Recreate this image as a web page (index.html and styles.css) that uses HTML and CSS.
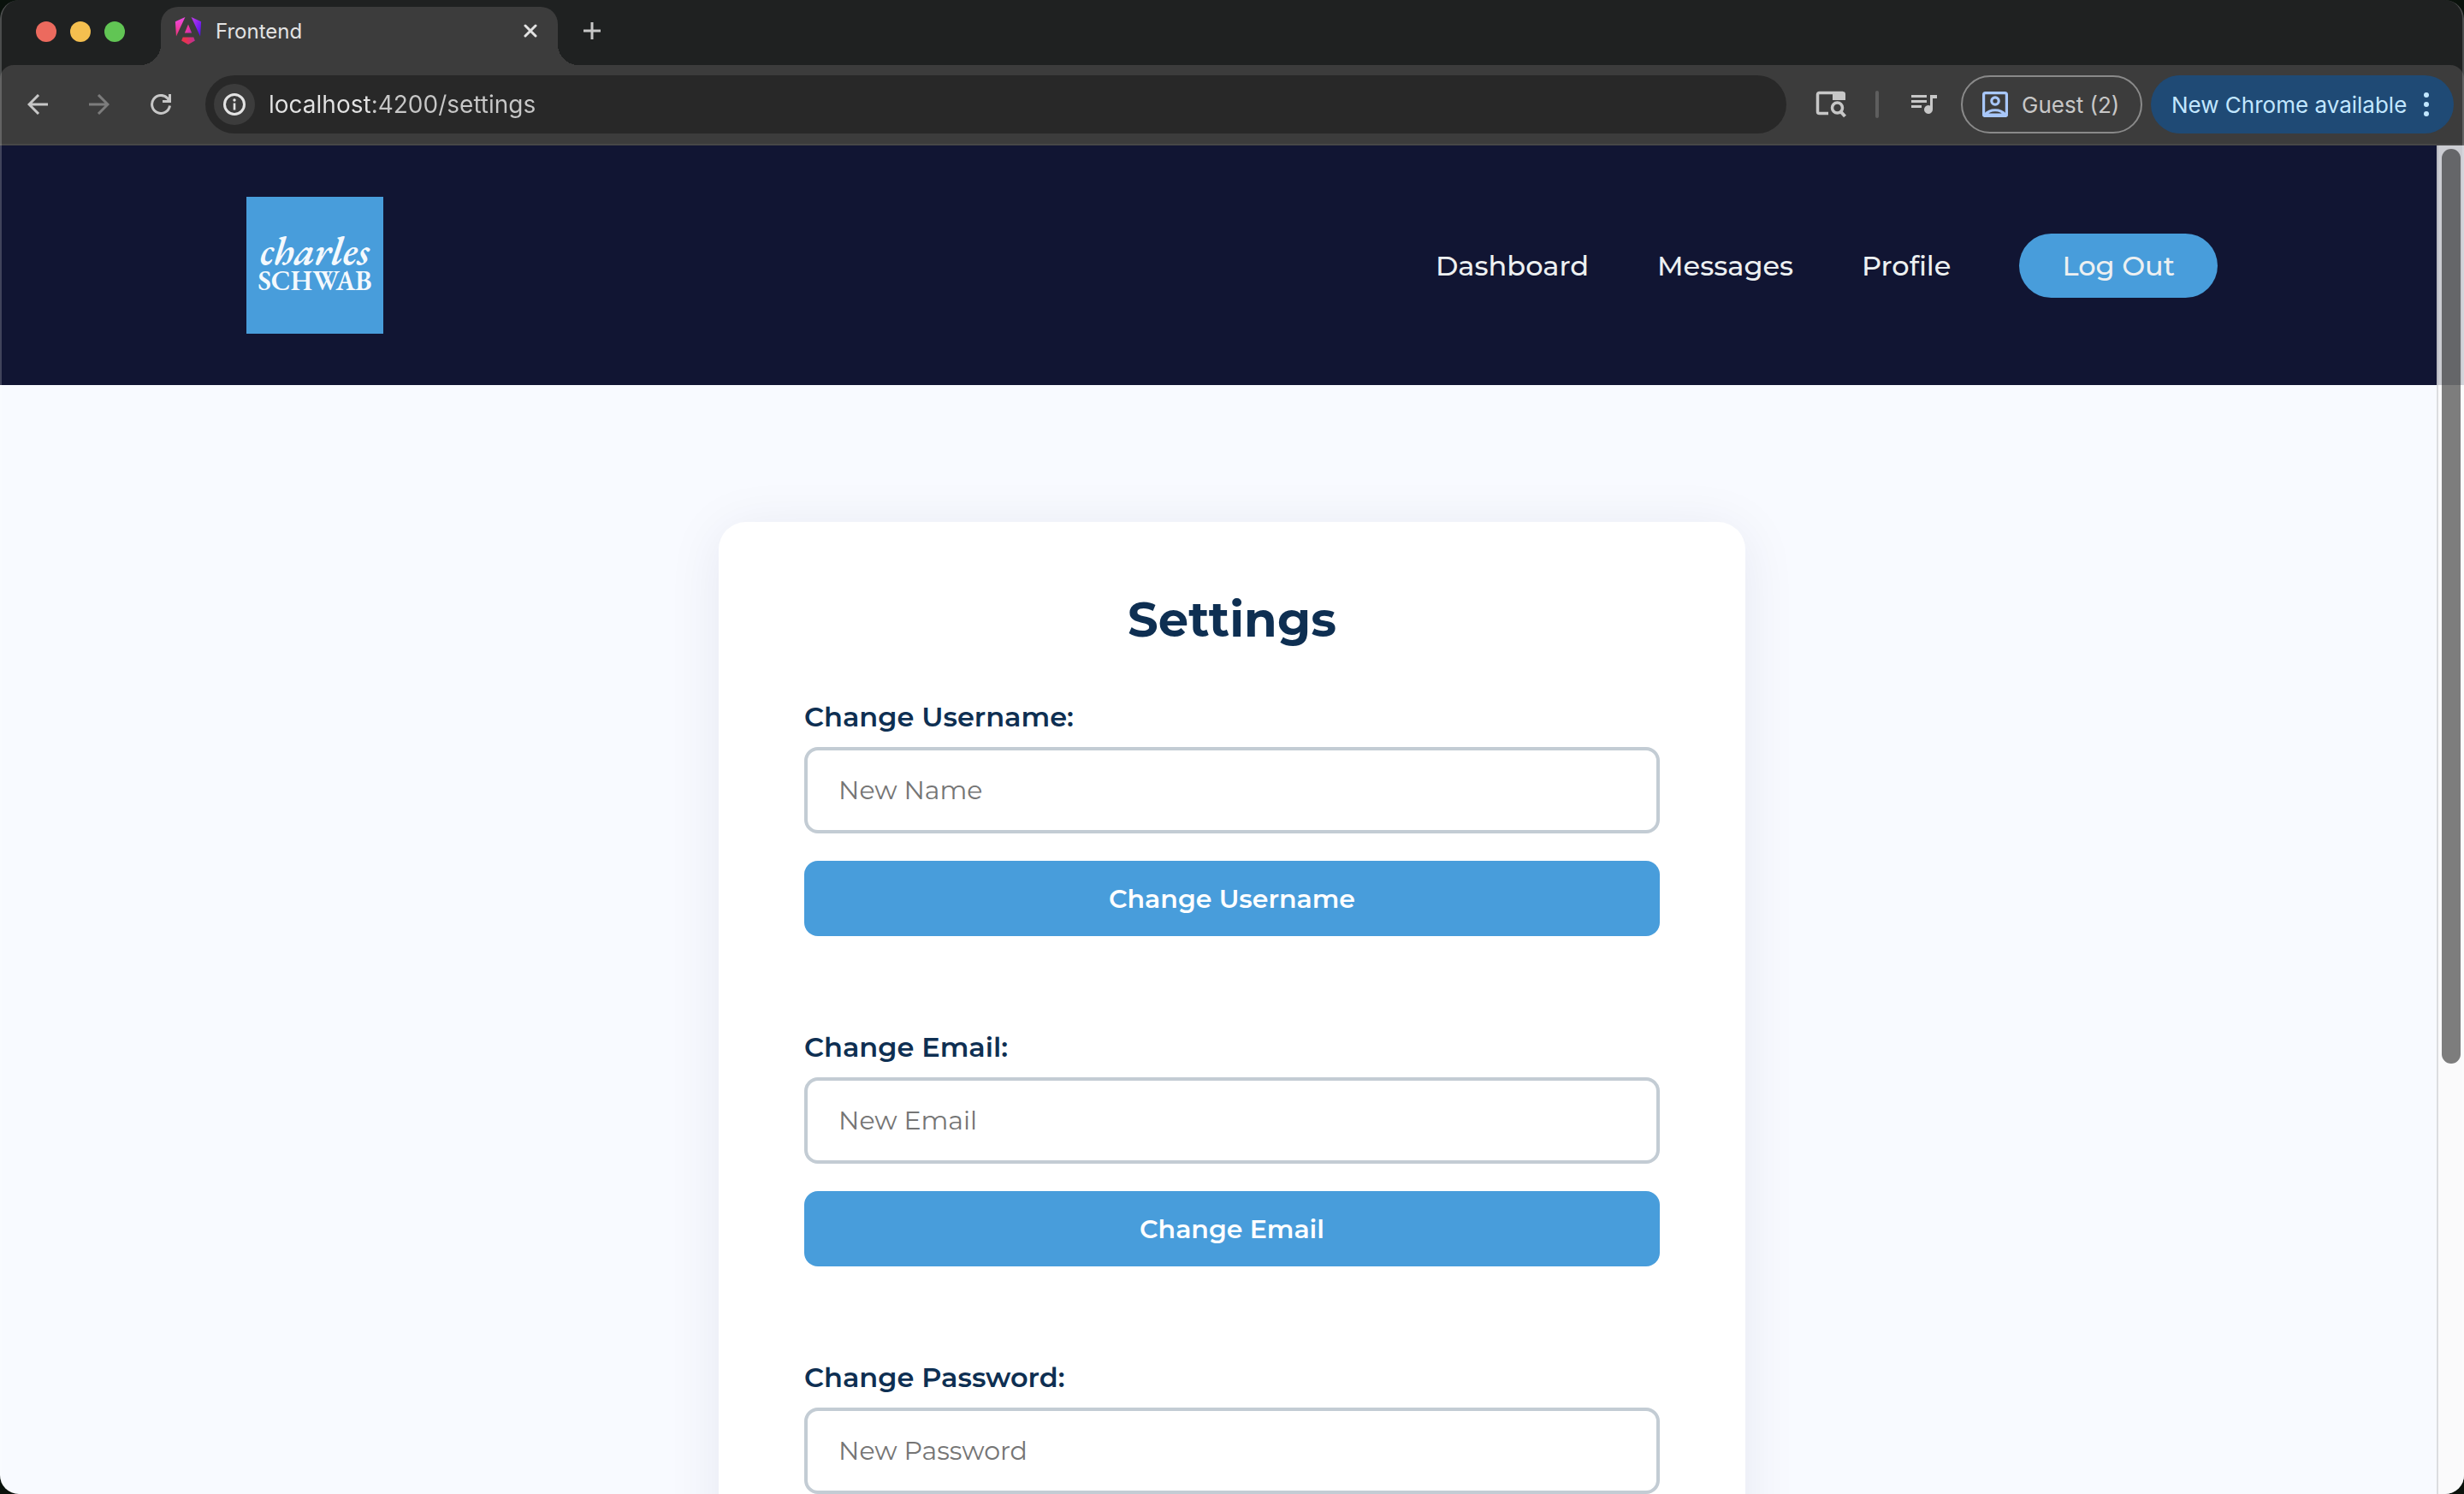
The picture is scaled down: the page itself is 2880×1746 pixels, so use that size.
FILE: index.html
```
<!DOCTYPE html>
<html lang="en">
<head>
<meta charset="utf-8">
<meta name="viewport" content="width=device-width, initial-scale=1">
<title>Frontend</title>
<link rel="stylesheet" href="styles.css">
</head>
<body>
<div class="window">
  <div class="tab-strip">
    <div class="lights">
      <span class="light light-close"></span>
      <span class="light light-min"></span>
      <span class="light light-max"></span>
    </div>
    <div class="tab">
      <svg class="favicon" viewBox="0 0 24 24" aria-hidden="true">
        <defs>
          <linearGradient id="ng-a" x1="0" y1="0.2" x2="1" y2="0.8">
            <stop offset="0" stop-color="#f74ad8"/>
            <stop offset="0.35" stop-color="#f0389c"/>
            <stop offset="1" stop-color="#c22cc0"/>
          </linearGradient>
          <linearGradient id="ng-l" x1="0" y1="0" x2="0" y2="1">
            <stop offset="0" stop-color="#ee4ae8"/>
            <stop offset="1" stop-color="#ee3373"/>
          </linearGradient>
          <linearGradient id="ng-r" x1="0" y1="0" x2="1" y2="1">
            <stop offset="0" stop-color="#c43ce8"/>
            <stop offset="1" stop-color="#4a0cf5"/>
          </linearGradient>
          <linearGradient id="ng-b" x1="0" y1="0" x2="1" y2="0">
            <stop offset="0.3" stop-color="#e8334f"/>
            <stop offset="1" stop-color="#bb2f9a"/>
          </linearGradient>
        </defs>
        <path fill="url(#ng-b)" d="M16.712 17.711H7.288l-1.204 2.916L12 24l5.916-3.373z"/>
        <path fill="url(#ng-r)" d="M14.692 0l7.832 16.855.814-12.856z"/>
        <path fill="url(#ng-l)" d="M9.308 0 .662 3.999l.814 12.856z"/>
        <path fill="url(#ng-a)" d="M8.903 13.93h6.198L12 6.396z"/>
      </svg>
      <span class="tab-title">Frontend</span>
      <button class="icon-button" type="button" aria-label="Close tab">
        <svg width="16" height="16" viewBox="0 0 16 16" fill="none" stroke="#e3e3e3" stroke-width="3" stroke-linecap="round"><path d="M2 2l12 12M14 2L2 14"/></svg>
      </button>
    </div>
    <button class="icon-button new-tab" type="button" aria-label="New tab">
      <svg width="20" height="20" viewBox="0 0 20 20" fill="none" stroke="#c7c7c7" stroke-width="3"><path d="M10 0v20M0 10h20"/></svg>
    </button>
  </div>

  <div class="toolbar">
    <div class="nav-buttons">
      <button class="icon-button nav-button" type="button" aria-label="Back">
        <svg width="24" height="24" viewBox="0 0 24 24" fill="none" stroke="#c7c7c7" stroke-width="3"><path d="M24 12H2.500M13 1L2 12l11 11"/></svg>
      </button>
      <button class="icon-button nav-button" type="button" aria-label="Forward">
        <svg width="24" height="24" viewBox="0 0 24 24" fill="none" stroke="#7c7c7c" stroke-width="3"><path d="M0 12h21.500M11 1l11 11-11 11"/></svg>
      </button>
      <button class="icon-button nav-button" type="button" aria-label="Reload">
        <svg width="24" height="24" viewBox="0 0 24 24" fill="none" stroke="#c7c7c7" stroke-width="3"><path d="M22.500 13.500A10.500 10.500 0 1 1 20 5l1.500 2.500M22.500 0v8.500H14"/></svg>
      </button>
    </div>
    <div class="omnibox">
      <button class="icon-button site-info" type="button" aria-label="View site information">
        <svg width="26" height="26" viewBox="0 0 26 26"><circle cx="13" cy="13" r="11.500" fill="none" stroke="#e3e3e3" stroke-width="3"/><circle cx="13" cy="8" r="1.700" fill="#e3e3e3"/><path d="M13 11.500v8" stroke="#e3e3e3" stroke-width="2.600"/></svg>
      </button>
      <input class="url" type="text" aria-label="Address" value="localhost:4200/settings">
    </div>
    <div class="toolbar-actions">
      <button class="icon-button" type="button" aria-label="Side panel search">
        <svg width="36" height="32" viewBox="0 0 36 32" fill="none" stroke="#c7c7c7"><path d="M15 26.500H4.500a2 2 0 0 1-2-2v-20a2 2 0 0 1 2-2H32" stroke-width="3.500"/><path d="M20 1h12a3 3 0 0 1 3 3v7H20z" fill="#c7c7c7" stroke="none"/><circle cx="25.500" cy="20" r="6" stroke-width="3.500"/><path d="M29.500 24.500l5 5.500" stroke-width="4"/></svg>
      </button>
      <span class="divider"></span>
      <button class="icon-button media" type="button" aria-label="Media controls">
        <svg width="30" height="24" viewBox="0 0 30 24" fill="#c7c7c7"><path d="M0 1h18v3H0zM0 7h18v3H0zM0 13h12v3H0z"/><path d="M22 1h8v4h-5v13a5 5 0 1 1-3-4.600z"/></svg>
      </button>
      <button class="guest" type="button">
        <svg width="30" height="30" viewBox="0 0 30 30" fill="none" stroke="#a8c7fa" stroke-width="3.200"><rect x="1.600" y="1.600" width="26.800" height="26.800" rx="2"/><circle cx="15" cy="11" r="4.200"/><path d="M3 27c6-7 18-7 24 0z"/></svg>
        Guest (2)
      </button>
      <button class="update" type="button">
        New Chrome available
        <svg width="6" height="28" viewBox="0 0 6 28" fill="#c2e7ff"><circle cx="3" cy="3" r="3"/><circle cx="3" cy="14" r="3"/><circle cx="3" cy="25" r="3"/></svg>
      </button>
    </div>
  </div>

  <div class="viewport">
    <header class="site-header">
      <a class="logo" href="#" aria-label="Charles Schwab">
        <span class="logo-first">charles</span>
        <span class="logo-last">SCHWAB</span>
      </a>
      <nav class="site-nav">
        <a href="#">Dashboard</a>
        <a href="#">Messages</a>
        <a href="#">Profile</a>
        <button class="logout" type="button">Log Out</button>
      </nav>
    </header>

    <main class="page">
      <section class="card">
        <h1>Settings</h1>
        <form class="group">
          <label for="username">Change Username:</label>
          <input id="username" type="text" placeholder="New Name">
          <button type="submit">Change Username</button>
        </form>
        <form class="group">
          <label for="email">Change Email:</label>
          <input id="email" type="email" placeholder="New Email">
          <button type="submit">Change Email</button>
        </form>
        <form class="group">
          <label for="password">Change Password:</label>
          <input id="password" type="password" placeholder="New Password">
        </form>
      </section>
    </main>

    <div class="scrollbar"><div class="thumb"></div></div>
  </div>
</div>
</body>
</html>
```
FILE: styles.css
```
* {
  box-sizing: border-box;
}

body {
  margin: 0;
  background: #0a120c;
  font-family: Montserrat, Inter, sans-serif;
}

button,
input {
  font-family: inherit;
}

button {
  border: 0;
  cursor: pointer;
}

svg {
  display: block;
  flex: none;
}

/* Browser window */

.window {
  position: relative;
  display: flex;
  flex-direction: column;
  height: 100vh;
  overflow: hidden;
  border-radius: 22px;
  background: #1f2121;
  font-family: Inter, sans-serif;
}

.window::after {
  content: "";
  position: absolute;
  inset: 0;
  border: solid rgba(255, 255, 255, 0.2);
  border-width: 0 2px;
  border-radius: 22px;
  pointer-events: none;
}

.icon-button {
  display: flex;
  align-items: center;
  justify-content: center;
  padding: 0;
  background: none;
}

.tab-strip {
  display: flex;
  flex: none;
  height: 76px;
}

.lights {
  display: flex;
  gap: 16px;
  width: 188px;
  padding: 25px 0 0 42px;
}

.light {
  width: 24px;
  height: 24px;
  border-radius: 50%;
}

.light-close {
  background: #ec6a5e;
}

.light-min {
  background: #f4bf4f;
}

.light-max {
  background: #61c554;
}

.tab {
  position: relative;
  display: flex;
  align-items: center;
  gap: 16px;
  width: 464px;
  margin-top: 8px;
  padding: 0 24px 12px 16px;
  border-radius: 20px 20px 0 0;
  background: #3c3c3c;
}

.tab::before,
.tab::after {
  content: "";
  position: absolute;
  bottom: 0;
  width: 24px;
  height: 24px;
}

.tab::before {
  right: 100%;
  background: radial-gradient(circle at 0 0, transparent 24px, #3c3c3c 24px);
}

.tab::after {
  left: 100%;
  background: radial-gradient(circle at 100% 0, transparent 24px, #3c3c3c 24px);
}

.favicon {
  width: 32px;
  height: 32px;
}

.tab-title {
  flex: 1;
  color: #e3e3e3;
  font-size: 24px;
}

.new-tab {
  width: 80px;
  padding-bottom: 4px;
}

.toolbar {
  display: flex;
  flex: none;
  align-items: center;
  height: 94px;
  padding: 0 12px 0 8px;
  border-bottom: 2px solid #474747;
  border-radius: 16px 16px 0 0;
  background: #3c3c3c;
}

.nav-buttons {
  display: flex;
  margin-right: 16px;
}

.nav-button {
  width: 72px;
  height: 68px;
}

.omnibox {
  display: flex;
  flex: 1;
  align-items: center;
  gap: 16px;
  height: 68px;
  padding: 0 10px;
  border-radius: 34px;
  background: #282828;
}

.site-info {
  width: 48px;
  height: 48px;
  border-radius: 50%;
  background: #3c3c3c;
}

.url {
  flex: 1;
  padding: 0;
  border: 0;
  outline: 0;
  background: linear-gradient(90deg, #e3e3e3 120px, #c7c7c7 120px);
  background-clip: text;
  color: transparent;
  font-size: 28px;
}

.toolbar-actions {
  display: flex;
  align-items: center;
  margin-left: 34px;
}

.divider {
  width: 4px;
  height: 32px;
  margin: 0 38px 0 34px;
  border-radius: 2px;
  background: #5e5e5e;
}

.media {
  margin-right: 28px;
}

.guest,
.update {
  display: flex;
  align-items: center;
  height: 68px;
  border-radius: 34px;
  font-size: 26px;
  white-space: nowrap;
}

.guest {
  gap: 16px;
  width: 212px;
  margin-right: 10px;
  padding: 0 0 0 23px;
  border: 2px solid #8a8a8a;
  background: none;
  color: #c7c7c7;
}

.update {
  justify-content: space-between;
  width: 354px;
  padding: 0 29px 0 24px;
  background: #1f4a75;
  color: #c2e7ff;
}

/* Site */

.viewport {
  position: relative;
  flex: 1;
  min-height: 0;
  overflow: hidden;
  background: #f8faff;
  font-family: Montserrat, Inter, sans-serif;
}

.site-header {
  display: flex;
  align-items: center;
  justify-content: space-between;
  padding: 60px 10%;
  background: #111533;
}

.logo {
  display: flex;
  flex-direction: column;
  align-items: center;
  justify-content: center;
  width: 160px;
  height: 160px;
  background: #489ddb;
  color: #f4f9fd;
  font-family: "EB Garamond", "Liberation Serif", serif;
  font-weight: 600;
  text-decoration: none;
}

.logo-first {
  font-size: 46px;
  font-style: italic;
  line-height: 36px;
}

.logo-last {
  font-size: 32px;
  line-height: 34px;
}

.site-nav {
  display: flex;
  align-items: center;
  gap: 80px;
}

.site-nav a,
.logout {
  color: #edf0f1;
  font-size: 32px;
  font-weight: 500;
  text-decoration: none;
}

.logout {
  padding: 0 50px;
  border-radius: 38px;
  background: #489ddb;
  line-height: 75px;
}

.page {
  padding: 160px 0;
}

.card {
  width: 1200px;
  max-width: 100%;
  margin: 0 auto;
  padding: 80px 100px;
  border-radius: 32px;
  background: #fff;
  box-shadow: 0 8px 64px rgba(30, 20, 80, 0.08);
}

.card h1 {
  margin: 0 0 58px;
  color: #0e2f52;
  font-size: 56px;
  font-weight: 700;
  line-height: 69px;
  text-align: center;
}

.group {
  display: flex;
  flex-direction: column;
  margin-bottom: 109px;
}

.group label {
  margin-bottom: 14px;
  color: #0e2f52;
  font-size: 32px;
  font-weight: 600;
  line-height: 42px;
}

.group input {
  height: 101px;
  margin-bottom: 32px;
  padding: 0 36px;
  border: 4px solid #c3ccd4;
  border-radius: 16px;
  background: #fff;
  color: #0e2f52;
  font-size: 30px;
}

.group input::placeholder {
  color: #757575;
}

.group button {
  height: 88px;
  border-radius: 16px;
  background: #489ddb;
  color: #fff;
  font-size: 30px;
  font-weight: 600;
}

.scrollbar {
  position: absolute;
  top: 0;
  right: 0;
  bottom: 0;
  width: 32px;
  padding: 4px 4px 0;
  border-left: 2px solid rgba(215, 215, 218, 0.85);
  background: rgba(250, 250, 250, 0.8);
  background-clip: padding-box;
}

.thumb {
  width: 22px;
  height: 68%;
  border-radius: 11px;
  background: rgba(0, 0, 0, 0.5);
}
```
